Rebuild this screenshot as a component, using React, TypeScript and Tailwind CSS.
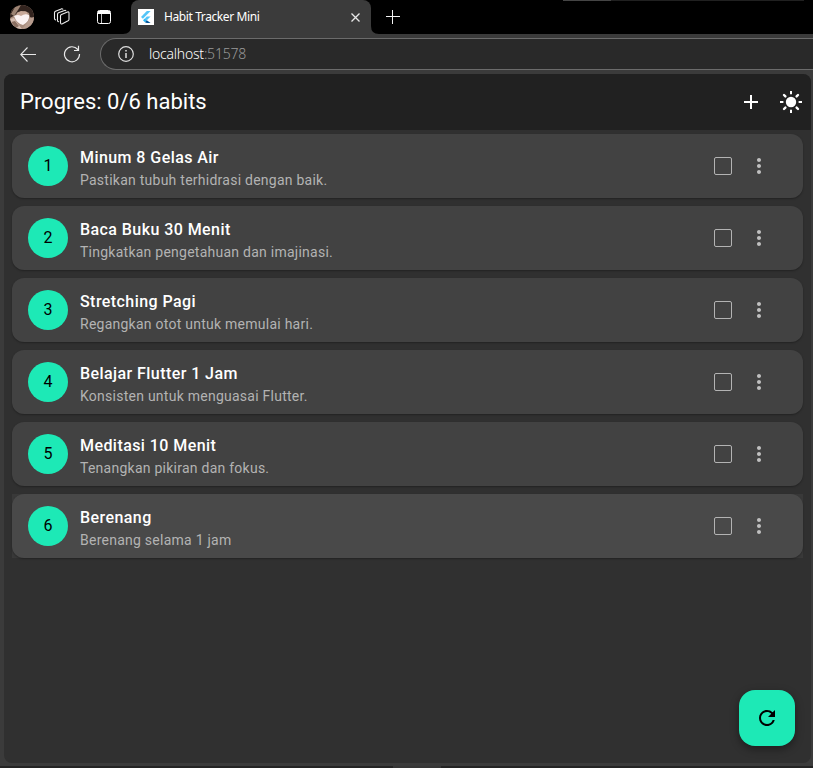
import { useState } from "react";
import { MdAdd, MdMoreVert, MdRefresh } from "react-icons/md";

const habits = [
  { title: "Minum 8 Gelas Air", note: "Pastikan tubuh terhidrasi dengan baik." },
  { title: "Baca Buku 30 Menit", note: "Tingkatkan pengetahuan dan imajinasi." },
  { title: "Stretching Pagi", note: "Regangkan otot untuk memulai hari." },
  { title: "Belajar Flutter 1 Jam", note: "Konsisten untuk menguasai Flutter." },
  { title: "Meditasi 10 Menit", note: "Tenangkan pikiran dan fokus." },
  { title: "Berenang", note: "Berenang selama 1 jam" },
];

function Avatar() {
  return (
    <svg className="size-6 rounded-full" viewBox="0 0 24 24">
      <rect width="24" height="24" fill="#a98d7e" />
      <path d="M0 0H24V14L20 12L19 8L15 6L8 7L5 10L0 13Z" fill="#33241f" />
      <path d="M1 9L5 2L11 0L8 5L4 11Z" fill="#9d8474" />
      <path d="M7 8L11 6L17 7L18 11L12 12L7 10Z" fill="#c9a999" />
      <path d="M4 11Q8 9 11 11Q15 8 19 10Q20 16 13 20Q7 19 4 11Z" fill="#fbf2f2" />
      <path d="M0 14L4 13L8 19L12 24H0Z" fill="#d3bcb0" />
      <path d="M1 17L5 16L9 21L6 23Z" fill="#8a6f61" />
      <path d="M20 13L24 12V24H12L17 18Z" fill="#b79c8e" />
    </svg>
  );
}

function WorkspacesIcon() {
  return (
    <svg width="18" height="18" viewBox="0 0 18 18" fill="none" stroke="#ececec" strokeWidth="1.1" strokeLinejoin="round" strokeLinecap="round">
      <path d="M7.5 8Q7.5 6.8 8.5 6.4L14.5 4Q16 3.5 16 5V11.2Q16 12.3 15.1 12.8L9.4 15.8Q7.5 16.5 7.5 14.6Z" />
      <path d="M5.6 13.7Q4.5 13.5 4.5 12.2V6.4Q4.5 5.2 5.5 4.8L11.5 2.4Q12.4 2.1 12.8 2.7" />
      <path d="M2.6 11.9Q1.5 11.6 1.5 10.4V4.8Q1.5 3.6 2.5 3.2L8.3 .9Q9.3 .6 9.8 1.2" />
    </svg>
  );
}

function TabActionsIcon() {
  return (
    <svg width="14" height="14" viewBox="0 0 14 14" fill="none" stroke="#fff">
      <rect x=".5" y=".5" width="13" height="13" rx="2" />
      <path d="M1 2.5H13" strokeWidth="3" />
      <path d="M4.5 4V13" strokeOpacity=".75" />
    </svg>
  );
}

function FlutterLogo() {
  return (
    <svg className="size-4 bg-white" viewBox="0 0 16 16">
      <path d="M8.8 2H12.6L4.9 9.8L3 7.9Z" fill="#54c5f8" />
      <path d="M8.8 7.4H12.6L8.8 11.3L6.9 9.4Z" fill="#54c5f8" />
      <path d="M5 11.3L6.9 9.4L8.8 11.3L6.9 13.2Z" fill="#29b6f6" />
      <path d="M6.9 13.2L8.8 11.3L12.6 14H8.8Z" fill="#01579b" />
    </svg>
  );
}

function SunIcon() {
  return (
    <svg width="24" height="24" viewBox="0 0 24 24" fill="none" stroke="currentColor" strokeWidth="2">
      <circle cx="12" cy="12" r="5.2" fill="currentColor" stroke="none" />
      <path d="M12 1V4.2M12 19.8V23M1 12H4.4M19.6 12H23" />
      <path d="M5 5L6.4 6.4M17.6 17.6L19 19M19 5L17.6 6.4M6.4 17.6L5 19" strokeWidth="2.4" strokeLinecap="round" />
    </svg>
  );
}

function TabStrip() {
  return (
    <div className="flex h-[34px] bg-black">
      <div className="flex w-[131px] items-center pl-[10px]">
        <Avatar />
        <span className="ml-[19px]"><WorkspacesIcon /></span>
        <span className="ml-[26px]"><TabActionsIcon /></span>
      </div>
      <div className="relative flex h-full w-60 items-center rounded-t-lg bg-[#3b3b3b] pl-[7px]">
        <svg className="absolute bottom-0 -left-2 size-2" viewBox="0 0 8 8"><path d="M8 0V8H0Q8 8 8 0Z" fill="#3b3b3b" /></svg>
        <svg className="absolute -right-2 bottom-0 size-2" viewBox="0 0 8 8"><path d="M0 0V8H8Q0 8 0 0Z" fill="#3b3b3b" /></svg>
        <FlutterLogo />
        <span className="ml-[10px] w-[187px] font-['Noto_Sans','Open_Sans',sans-serif] text-xs leading-4 text-white">
          <span className="inline-block tracking-[-0.4px]">Habit Tracker Mini</span>
        </span>
        <svg width="9" height="9" viewBox="0 0 9 9" stroke="#e8e8e8" strokeWidth="1.3"><path d="M.5.5L8.5 8.5M8.5.5L.5 8.5" /></svg>
      </div>
      <svg className="mt-[10px] ml-[15px]" width="14" height="14" viewBox="0 0 14 14" stroke="#f2f2f2"><path d="M6.5 0V14M0 6.5H14" /></svg>
      <div className="ml-[163px] flex h-px flex-1 pr-[9px]">
        <div className="w-12 bg-[#454545]" />
        <div className="flex-1 bg-[#202020]" />
      </div>
    </div>
  );
}

function Toolbar() {
  return (
    <div className="flex h-10 items-center">
      <svg className="ml-5" width="17" height="15" viewBox="0 0 17 15" fill="none" stroke="#e8e8e8" strokeWidth="1.1"><path d="M7.5.5L.7 7.5L7.5 14.5M.7 7.5H16" /></svg>
      <svg className="ml-[26px]" width="18" height="18" viewBox="0 0 18 18" fill="none" stroke="#e8e8e8" strokeWidth="1.2"><path d="M16.5 9A7.5 7.5 0 1 1 14.8 4.5L15.5 5.5M15.5 .8V5.5H11" /></svg>
      <div className="ml-[19px] flex h-8 flex-1 items-center rounded-l-full border border-r-0 border-[#6b6b6b] bg-[#292929] pl-[17px]">
        <svg width="16" height="16" viewBox="0 0 16 16" fill="none" stroke="#dedede" strokeWidth="1.2"><circle cx="8" cy="8" r="7.3" /><path d="M8 7V12M8 4V5.5" strokeWidth="1.5" /></svg>
        <span className="ml-[15px] font-['Noto_Sans','Open_Sans',sans-serif] text-sm leading-5 font-light tracking-[-0.22px] text-white">
          localhost<span className="text-[#999]">:51578</span>
        </span>
      </div>
    </div>
  );
}

export default function App() {
  const [done, setDone] = useState<number[]>([]);
  const toggle = (index: number) =>
    setDone(done.includes(index) ? done.filter((item) => item !== index) : [...done, index]);

  return (
    <div className="flex h-screen flex-col overflow-hidden bg-[#3b3b3b] font-[Roboto,sans-serif]">
      <TabStrip />
      <Toolbar />
      <div className="relative mr-[2px] ml-1 h-[689px] overflow-hidden rounded-lg bg-[#303030]">
        <header className="flex h-14 items-center bg-[#212121] pl-4 text-white">
          <h1 className="flex-1 text-[22px] leading-7">Progres: {done.length}/{habits.length} habits</h1>
          <button className="flex size-10 items-center justify-center" aria-label="Add"><MdAdd size={24} /></button>
          <button className="flex size-10 items-center justify-center" aria-label="Theme"><SunIcon /></button>
        </header>
        <ul className="flex flex-col gap-2 pt-1 pr-2 pl-2">
          {habits.map((habit, index) => (
            <li key={habit.title} className={index === 5 ? "bg-[#393939]" : ""}>
              <div className={`flex h-16 items-center rounded-xl pl-4 shadow-[0_1px_2px_rgba(0,0,0,0.3)] ${index === 5 ? "bg-[#494949]" : "bg-[#424242]"}`}>
                <div className="flex size-10 items-center justify-center rounded-full bg-[#1de9b6] text-base text-black">{index + 1}</div>
                <div className="ml-3 flex-1 pt-1">
                  <div className="text-base leading-6 font-medium tracking-[0.43px] text-white">{habit.title}</div>
                  <div className="text-sm leading-5 tracking-[0.25px] text-[#b3b3b3]">{habit.note}</div>
                </div>
                <button
                  aria-label={habit.title}
                  onClick={() => toggle(index)}
                  className={`mr-[15px] size-[18px] rounded-[2px] border border-[#b3b3b3] ${done.includes(index) ? "bg-[#1de9b6]" : ""}`}
                />
                <MdMoreVert size={24} className="mr-8 text-[#c0c0c0]" />
              </div>
            </li>
          ))}
        </ul>
        <button aria-label="Reset" onClick={() => setDone([])} className="absolute right-4 bottom-[17px] flex size-14 items-center justify-center rounded-2xl bg-[#1de9b6] text-black shadow-[0_3px_8px_rgba(0,0,0,0.4)]">
          <MdRefresh size={24} />
        </button>
      </div>
      <div className="mt-[3px] flex h-[2px] bg-[#242424] pl-[393px]">
        <div className="w-12 bg-[#363636]" />
      </div>
    </div>
  );
}
